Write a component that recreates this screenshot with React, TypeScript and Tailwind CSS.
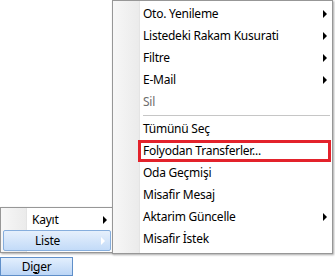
import React from "react";

type Item = { label: string; arrow?: boolean; disabled?: boolean; sep?: boolean; marked?: boolean };

const MAIN: Item[] = [
  { label: "Oto. Yenileme", arrow: true },
  { label: "Listedeki Rakam Kusurati", arrow: true },
  { label: "Filtre", arrow: true },
  { label: "E-Mail", arrow: true },
  { label: "Sil", disabled: true },
  { label: "", sep: true },
  { label: "Tümünü Seç" },
  { label: "Folyodan Transferler...", marked: true },
  { label: "Oda Geçmişi" },
  { label: "Misafir Mesaj" },
  { label: "Aktarim Güncelle", arrow: true },
  { label: "Misafir İstek" },
];

function Arrow({ light }: { light?: boolean }) {
  return (
    <span
      className={`absolute right-[5px] top-[7px] w-0 h-0 border-t-[4px] border-b-[4px] border-l-[4px] border-t-transparent border-b-transparent ${
        light ? "border-l-white" : "border-l-black"
      }`}
    />
  );
}

export default function App() {
  return (
    <div
      className="relative w-[335px] h-[279px] bg-white text-[12px] tracking-[-0.25px] text-black overflow-hidden"
      style={{ fontFamily: '"Noto Sans", "Liberation Sans", sans-serif' }}
    >
      {/* Diger button */}
      <div className="absolute left-0 top-[257px] w-[73px] h-[19px] border border-[#5f8fc9] bg-gradient-to-b from-[#e3effd] to-[#bcd6f6] flex items-center justify-center leading-none">
        <span>
          Di<span className="underline">g</span>er
        </span>
      </div>

      {/* small menu */}
      <div className="absolute left-0 top-[207px] w-[113px] h-[46px] border border-[#979797] bg-white shadow-[1px_1px_2px_rgba(0,0,0,0.35)] flex">
        <div className="w-[26px] h-full bg-gradient-to-r from-[#f7f7f7] to-[#ebebeb] border-r border-[#e4e4e4]" />
        <div className="flex-1 flex flex-col pt-[1px]">
          <div className="relative h-[21px] flex items-center pl-[5px]">
            Kayıt
            <Arrow />
          </div>
        </div>
        <div className="absolute left-[2px] right-[1px] top-[22px] h-[21px] rounded-[2px] border border-[#86aedd] bg-gradient-to-b from-[#e6f0fc] to-[#c3dbf8] flex items-center pl-[31px]">
          Liste
          <span className="absolute right-[5px] top-[6px] w-0 h-0 border-t-[4px] border-b-[4px] border-l-[4px] border-t-transparent border-b-transparent border-l-white" />
        </div>
      </div>

      {/* main menu */}
      <div className="absolute left-[112px] top-0 w-[221px] h-[254px] border border-[#979797] bg-white shadow-[1px_1px_2px_rgba(0,0,0,0.35)] flex">
        <div className="w-[27px] h-full bg-gradient-to-r from-[#f7f7f7] to-[#ebebeb] border-r border-[#e4e4e4]" />
        <div className="flex-1 flex flex-col pt-[2px]">
          {MAIN.map((it, i) =>
            it.sep ? (
              <div key={i} className="h-[5px] flex items-center pl-[3px] pr-[2px]">
                <div className="w-full h-[1px] bg-[#c6c6c6]" />
              </div>
            ) : (
              <div
                key={i}
                className={`relative h-[22px] flex items-center pl-[3px] ${it.disabled ? "text-[#6d6d6d]" : ""}`}
              >
                {it.marked && (
                  <span className="absolute -left-[2px] right-[1px] top-0 bottom-0 border-[3px] border-[#e3222b]" />
                )}
                <span className="relative">{it.label}</span>
                {it.arrow && <Arrow />}
              </div>
            )
          )}
        </div>
      </div>
    </div>
  );
}
